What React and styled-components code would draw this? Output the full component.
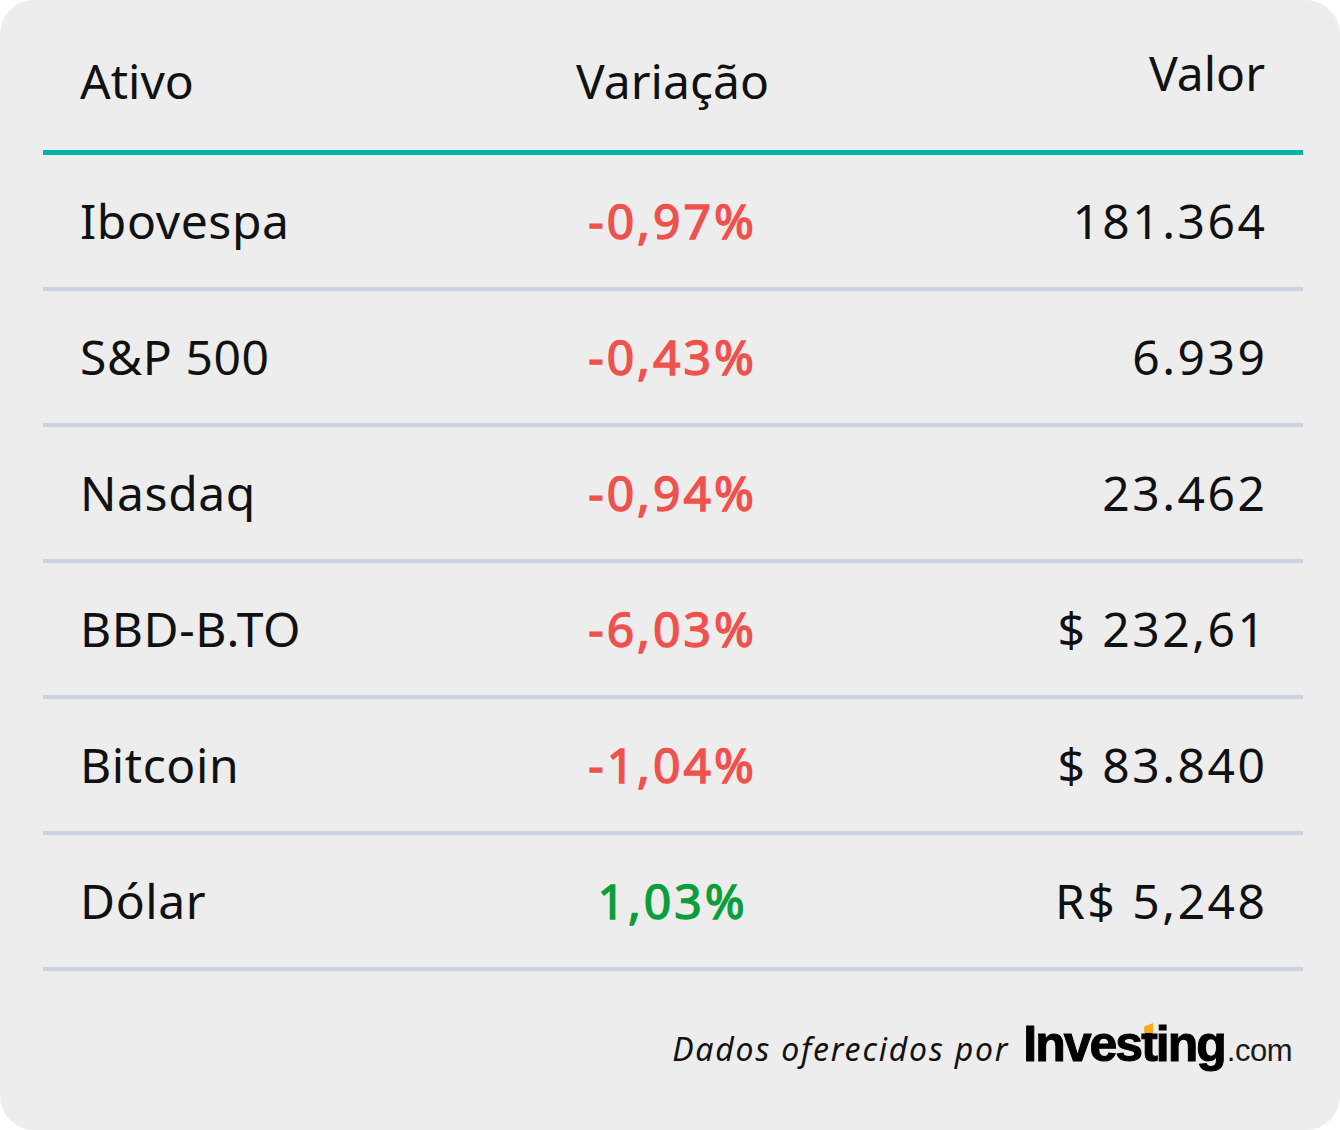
import React from 'react';
import styled, { createGlobalStyle } from 'styled-components';

const GlobalStyle = createGlobalStyle`
  html, body {
    margin: 0;
    padding: 0;
    background: #ffffff;
  }
  * {
    box-sizing: border-box;
  }
`;

const Card = styled.div`
  width: 1340px;
  height: 1130px;
  background: #ededed;
  border-radius: 34px;
  overflow: hidden;
  font-family: "Noto Sans", "Open Sans", sans-serif;
  color: #111111;
`;

const Table = styled.div`
  padding: 0 37px 0 43px;
`;

const HeaderRow = styled.div`
  display: grid;
  grid-template-columns: 1fr 1fr 1fr;
  height: 155px;
  padding: 49px 38px 0 37px;
  border-bottom: 5px solid #00b4a8;
`;

const Row = styled.div`
  display: grid;
  grid-template-columns: 1fr 1fr 1fr;
  align-items: center;
  height: 136px;
  padding: 0 38px 0 37px;
  border-bottom: 4px solid #cdd2e0;
`;

const Cell = styled.div`
  font-size: 48px;
  line-height: 64px;
  white-space: nowrap;
  text-align: ${p => p.$align || 'left'};
  letter-spacing: ${p => p.$spacing || 0}px;
  margin-top: ${p => (p.$raise ? `-${p.$raise}px` : '0')};
  margin-right: ${p => (p.$align === 'right' ? `-${p.$spacing || 0}px` : '0')};
`;

const Change = styled(Cell)`
  font-weight: 400;
  color: ${p => (p.$up ? '#0b9e3b' : '#ef514d')};
  -webkit-text-stroke: 1.4px ${p => (p.$up ? '#0b9e3b' : '#ef514d')};
`;

const Footer = styled.div`
  display: flex;
  justify-content: flex-end;
  align-items: baseline;
  gap: 14px;
  margin-top: 48px;
  padding-right: 48px;
`;

const Credit = styled.span`
  font-style: italic;
  font-size: 32px;
  line-height: 50px;
  letter-spacing: 1.8px;
  color: #111111;
`;

const Logo = styled.span`
  display: inline-flex;
  align-items: baseline;
  line-height: 50px;
`;

const Brand = styled.span`
  font-family: "Liberation Sans", Arial, sans-serif;
  font-weight: 700;
  font-size: 50px;
  letter-spacing: -2px;
  color: #000000;
  -webkit-text-stroke: 1px #000000;
`;

const AccentT = styled.span`
  position: relative;

  &::before {
    content: '';
    position: absolute;
    left: 3px;
    top: 7px;
    width: 9px;
    height: 10px;
    background: #f7a81b;
    clip-path: polygon(0 35%, 100% 0, 100% 100%, 0 100%);
  }
`;

const Domain = styled.span`
  font-family: "Liberation Sans", Arial, sans-serif;
  font-size: 31px;
  letter-spacing: -0.5px;
  color: #1a1a1a;
  margin-left: 2px;
`;

const rows = [
  { name: 'Ibovespa', change: '-0,97%', value: '181.364' },
  { name: 'S&P 500', change: '-0,43%', value: '6.939' },
  { name: 'Nasdaq', change: '-0,94%', value: '23.462' },
  { name: 'BBD-B.TO', change: '-6,03%', value: '$ 232,61' },
  { name: 'Bitcoin', change: '-1,04%', value: '$ 83.840' },
  { name: 'Dólar', change: '1,03%', value: 'R$ 5,248', up: true },
];

const App = () => (
  <>
    <GlobalStyle />
    <Card>
      <Table>
        <HeaderRow>
          <Cell>Ativo</Cell>
          <Cell $align="center">Variação</Cell>
          <Cell $align="right" $raise={8}>Valor</Cell>
        </HeaderRow>
        {rows.map(r => (
          <Row key={r.name}>
            <Cell $spacing={0.6}>{r.name}</Cell>
            <Change $align="center" $spacing={3} $up={r.up}>{r.change}</Change>
            <Cell $align="right" $spacing={2.5}>{r.value}</Cell>
          </Row>
        ))}
      </Table>
      <Footer>
        <Credit>Dados oferecidos por</Credit>
        <Logo>
          <Brand>
            Inves<AccentT>t</AccentT>ing
          </Brand>
          <Domain>.com</Domain>
        </Logo>
      </Footer>
    </Card>
  </>
);

export default App;
